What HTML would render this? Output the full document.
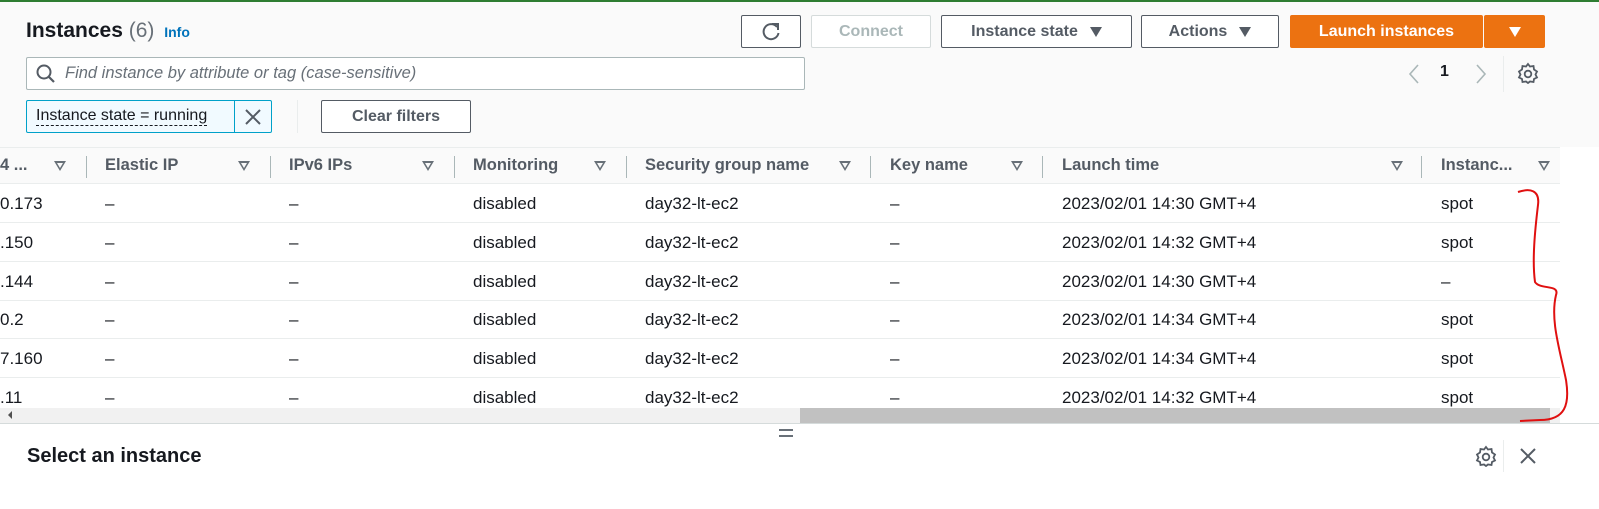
<!DOCTYPE html>
<html><head><meta charset="utf-8"><style>
*{margin:0;padding:0;box-sizing:border-box}
body{width:1599px;height:509px;overflow:hidden;background:#fff;font-family:"Liberation Sans",sans-serif;color:#16191f;position:relative}
.abs{position:absolute}
.top{left:0;top:0;width:1599px;height:147px;background:#fafafa;border-top:2px solid #2e7d32}
.btn{position:absolute;height:33px;border:1px solid #545b64;border-radius:2px;background:#fff;font-weight:bold;font-size:16px;color:#545b64;display:flex;align-items:center;justify-content:center}
.tri{display:inline-block;width:0;height:0;border-left:6px solid transparent;border-right:6px solid transparent;border-top:10px solid #545b64;margin-left:12px}
.hdr{left:0;top:147px;width:1560px;height:37px;background:#fafafa;border-bottom:1px solid #eaeded;border-top:1px solid #eaeded}
.hdr span{position:absolute;top:8px;font-weight:bold;font-size:16.5px;color:#545b64}
.sep{position:absolute;top:8px;width:1px;height:22px;background:#aab7b8}
.ft{position:absolute;top:13px;width:0;height:0;border-left:6px solid transparent;border-right:6px solid transparent;border-top:10px solid #687078}
.ft:after{content:"";position:absolute;left:-3px;top:-8px;border-left:3px solid transparent;border-right:3px solid transparent;border-top:5px solid #fafafa}
.row{position:absolute;left:0;width:1560px;height:39px;border-bottom:1px solid #eaeded;font-size:17px}
.row span{position:absolute;top:10px}
</style></head><body>
<div class="abs top"></div>
<div class="abs" style="left:26px;top:19px;font-size:21px;font-weight:bold">Instances <span style="font-weight:normal;color:#687078">(6)</span> <span style="font-size:14px;color:#0073bb;margin-left:4px">Info</span></div>
<div class="btn" style="left:741px;top:15px;width:60px"><svg width="22" height="22" viewBox="0 0 22 22"><path d="M17 6 A7.5 7.5 0 1 0 18.5 12" fill="none" stroke="#545b64" stroke-width="2"/><path d="M12 3 L18 3 L18 9" fill="none" stroke="#545b64" stroke-width="2"/></svg></div>
<div class="btn" style="left:811px;top:15px;width:120px;border-color:#d5dbdb;color:#aab7b8">Connect</div>
<div class="btn" style="left:941px;top:15px;width:191px">Instance state<i class="tri"></i></div>
<div class="btn" style="left:1141px;top:15px;width:138px">Actions<i class="tri"></i></div>
<div class="btn" style="left:1290px;top:15px;width:193px;background:#ec7211;border-color:#ec7211;color:#fff">Launch instances</div>
<div class="btn" style="left:1484px;top:15px;width:61px;background:#ec7211;border-color:#ec7211"><i class="tri" style="margin:0;border-top-color:#fff"></i></div>
<div class="abs" style="left:26px;top:57px;width:779px;height:33px;border:1px solid #aab7b8;border-radius:2px;background:#fff"></div>
<svg class="abs" style="left:35px;top:63px" width="22" height="22"><circle cx="9" cy="9" r="6.5" fill="none" stroke="#545b64" stroke-width="2"/><path d="M14 14 L19 19" stroke="#545b64" stroke-width="2.2"/></svg>
<div class="abs" style="left:65px;top:64px;font-size:16.5px;font-style:italic;color:#687078">Find instance by attribute or tag (case-sensitive)</div>
<svg class="abs" style="left:1405px;top:62px" width="20" height="24"><path d="M13 3 L5 12 L13 21" fill="none" stroke="#aab7b8" stroke-width="1.6"/></svg>
<div class="abs" style="left:1440px;top:63px;font-size:16px;font-weight:bold">1</div>
<svg class="abs" style="left:1472px;top:62px" width="20" height="24"><path d="M5 3 L13 12 L5 21" fill="none" stroke="#aab7b8" stroke-width="1.6"/></svg>
<div class="abs" style="left:1503px;top:56px;width:1px;height:36px;background:#eaeded"></div>
<svg class="abs" style="left:1517px;top:62px" width="22" height="22" viewBox="0 0 22 22"><path d="M11 2 L13 4.5 L16.5 4 L17 7.5 L20 9.5 L18.5 12.5 L20 15.5 L17 17 L16.5 20 L13 19.5 L11 21 L9 19.5 L5.5 20 L5 17 L2 15.5 L3.5 12.5 L2 9.5 L5 7.5 L5.5 4 L9 4.5 Z" fill="none" stroke="#545b64" stroke-width="1.8"/><circle cx="11" cy="12" r="3.3" fill="none" stroke="#545b64" stroke-width="1.8"/></svg>
<div class="abs" style="left:26px;top:100px;width:246px;height:33px;border:1px solid #00a1c9;border-radius:2px;background:#f1faff"></div>
<div class="abs" style="left:36px;top:107px;font-size:16px;border-bottom:1px dashed #16191f;line-height:18px">Instance state = running</div>
<div class="abs" style="left:234px;top:100px;width:1px;height:33px;background:#00a1c9"></div>
<svg class="abs" style="left:243px;top:107px" width="20" height="20"><path d="M3 3 L17 17 M17 3 L3 17" stroke="#545b64" stroke-width="2"/></svg>
<div class="abs" style="left:297px;top:100px;width:1px;height:33px;background:#eaeded"></div>
<div class="btn" style="left:321px;top:100px;width:150px">Clear filters</div>

<div class="abs hdr">
<span style="left:0">4 ...</span><i class="ft" style="left:54px"></i><i class="sep" style="left:86px"></i>
<span style="left:105px">Elastic IP</span><i class="ft" style="left:238px"></i><i class="sep" style="left:270px"></i>
<span style="left:289px">IPv6 IPs</span><i class="ft" style="left:422px"></i><i class="sep" style="left:454px"></i>
<span style="left:473px">Monitoring</span><i class="ft" style="left:594px"></i><i class="sep" style="left:626px"></i>
<span style="left:645px">Security group name</span><i class="ft" style="left:839px"></i><i class="sep" style="left:870px"></i>
<span style="left:890px">Key name</span><i class="ft" style="left:1011px"></i><i class="sep" style="left:1042px"></i>
<span style="left:1062px">Launch time</span><i class="ft" style="left:1391px"></i><i class="sep" style="left:1421px"></i>
<span style="left:1441px">Instanc...</span><i class="ft" style="left:1538px"></i>
</div>

<div class="row" style="top:184px"><span style="left:0">0.173</span><span style="left:105px">–</span><span style="left:289px">–</span><span style="left:473px">disabled</span><span style="left:645px">day32-lt-ec2</span><span style="left:890px">–</span><span style="left:1062px">2023/02/01 14:30 GMT+4</span><span style="left:1441px">spot</span></div>
<div class="row" style="top:223px"><span style="left:0">.150</span><span style="left:105px">–</span><span style="left:289px">–</span><span style="left:473px">disabled</span><span style="left:645px">day32-lt-ec2</span><span style="left:890px">–</span><span style="left:1062px">2023/02/01 14:32 GMT+4</span><span style="left:1441px">spot</span></div>
<div class="row" style="top:262px"><span style="left:0">.144</span><span style="left:105px">–</span><span style="left:289px">–</span><span style="left:473px">disabled</span><span style="left:645px">day32-lt-ec2</span><span style="left:890px">–</span><span style="left:1062px">2023/02/01 14:30 GMT+4</span><span style="left:1441px">–</span></div>
<div class="row" style="top:300px"><span style="left:0">0.2</span><span style="left:105px">–</span><span style="left:289px">–</span><span style="left:473px">disabled</span><span style="left:645px">day32-lt-ec2</span><span style="left:890px">–</span><span style="left:1062px">2023/02/01 14:34 GMT+4</span><span style="left:1441px">spot</span></div>
<div class="row" style="top:339px"><span style="left:0">7.160</span><span style="left:105px">–</span><span style="left:289px">–</span><span style="left:473px">disabled</span><span style="left:645px">day32-lt-ec2</span><span style="left:890px">–</span><span style="left:1062px">2023/02/01 14:34 GMT+4</span><span style="left:1441px">spot</span></div>
<div class="row" style="top:378px;border:none"><span style="left:0">.11</span><span style="left:105px">–</span><span style="left:289px">–</span><span style="left:473px">disabled</span><span style="left:645px">day32-lt-ec2</span><span style="left:890px">–</span><span style="left:1062px">2023/02/01 14:32 GMT+4</span><span style="left:1441px">spot</span></div>

<div class="abs" style="left:0;top:408px;width:1560px;height:15px;background:#f1f1f1"></div>
<div class="abs" style="left:800px;top:408px;width:750px;height:15px;background:#c1c1c1"></div>
<div class="abs" style="left:8px;top:411px;border-top:4px solid transparent;border-bottom:4px solid transparent;border-right:4px solid #505050"></div>
<div class="abs" style="left:0;top:423px;width:1599px;height:1px;background:#d5dbdb"></div>
<div class="abs" style="left:779px;top:429px;width:14px;height:2px;background:#687078"></div>
<div class="abs" style="left:779px;top:435px;width:14px;height:2px;background:#687078"></div>
<div class="abs" style="left:27px;top:445px;font-size:20px;font-weight:bold">Select an instance</div>
<svg class="abs" style="left:1475px;top:445px" width="22" height="22" viewBox="0 0 22 22"><path d="M11 2 L13 4.5 L16.5 4 L17 7.5 L20 9.5 L18.5 12.5 L20 15.5 L17 17 L16.5 20 L13 19.5 L11 21 L9 19.5 L5.5 20 L5 17 L2 15.5 L3.5 12.5 L2 9.5 L5 7.5 L5.5 4 L9 4.5 Z" fill="none" stroke="#545b64" stroke-width="1.8"/><circle cx="11" cy="12" r="3.3" fill="none" stroke="#545b64" stroke-width="1.8"/></svg>
<div class="abs" style="left:1503px;top:440px;width:1px;height:32px;background:#eaeded"></div>
<svg class="abs" style="left:1518px;top:446px" width="20" height="20"><path d="M3 3 L17 17 M17 3 L3 17" stroke="#545b64" stroke-width="2"/></svg>

<svg class="abs" style="left:0;top:0" width="1599" height="509"><path d="M1518 192 C1530 188 1540 190 1538 205 C1535 230 1532 260 1535 282 C1540 290 1560 284 1556 295 C1550 320 1560 350 1566 380 C1570 405 1565 420 1540 420 L1520 421" fill="none" stroke="#e01010" stroke-width="2"/></svg>
</body></html>
